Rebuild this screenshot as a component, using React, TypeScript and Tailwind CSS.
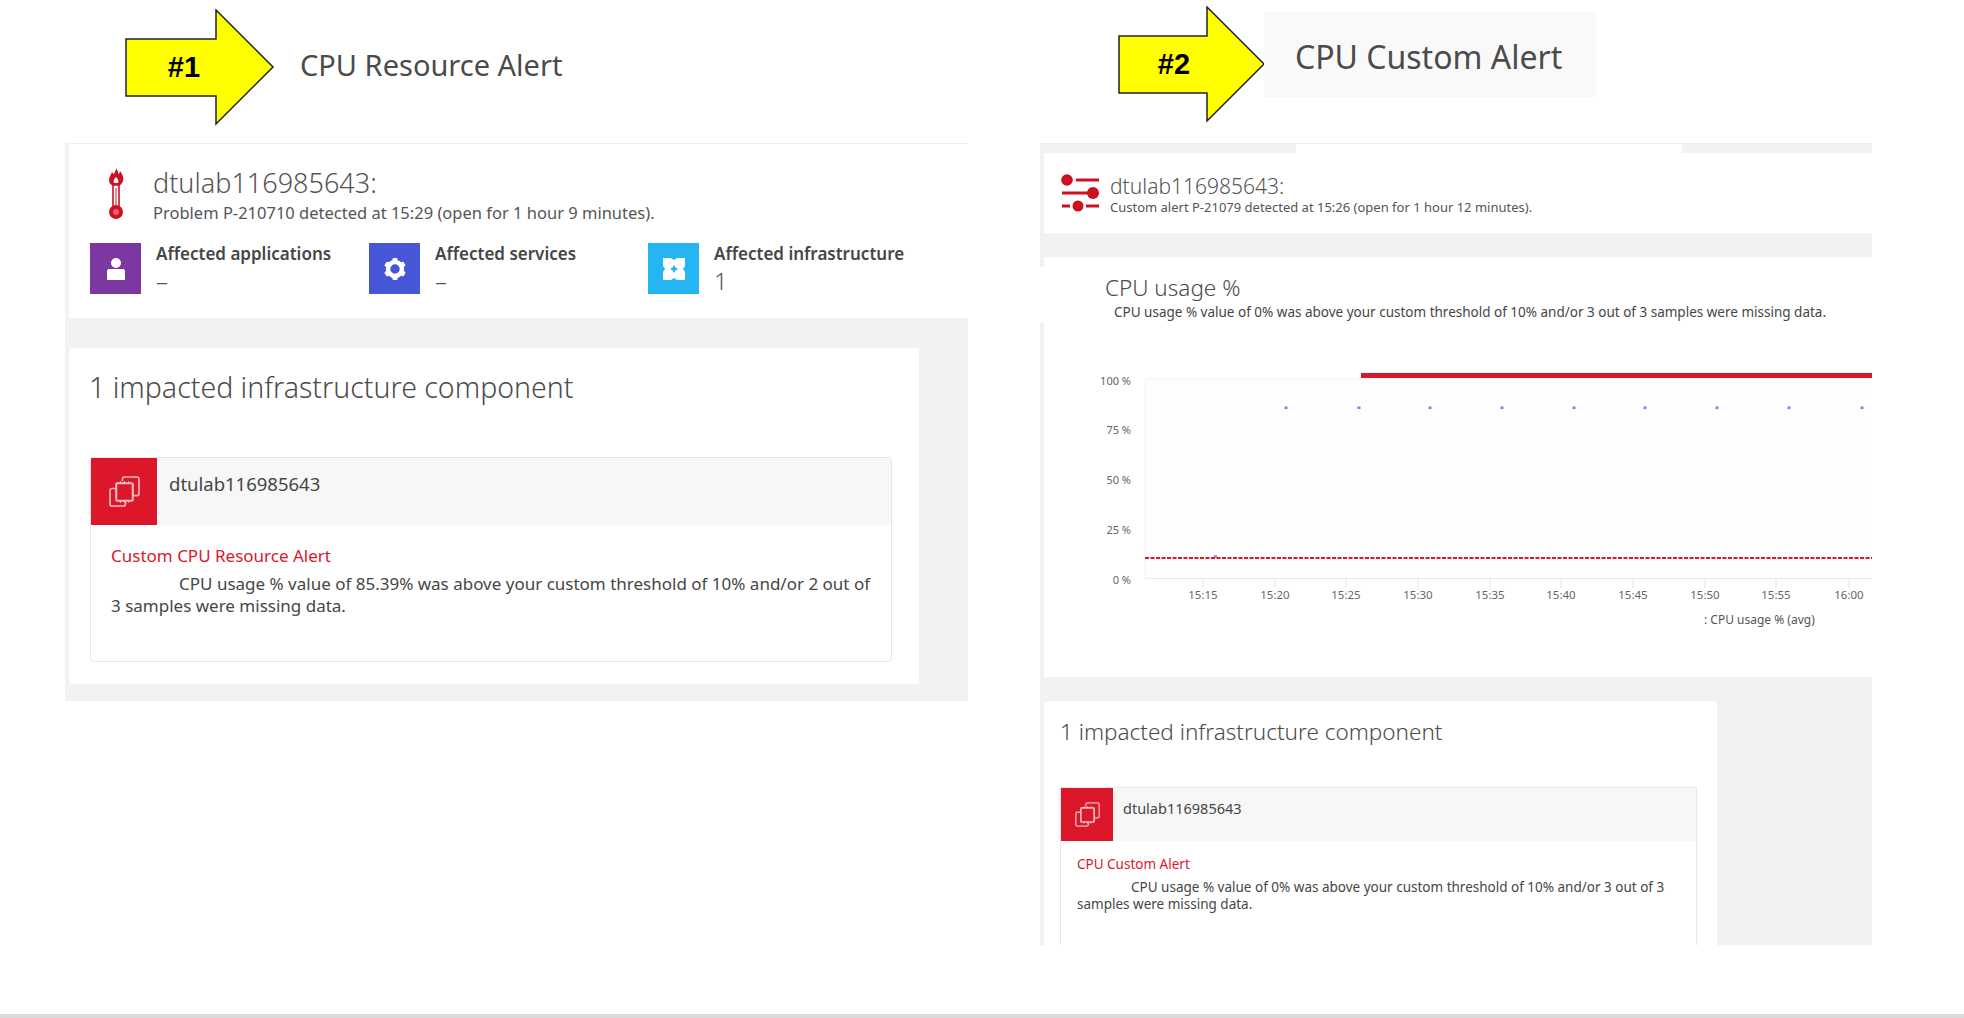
/* Two alert screenshots side by side, each labelled with a yellow arrow. */
const bodyFont = "font-['Noto_Sans',sans-serif]";

function Arrow({ label, tip, base, labelX }: { label: string; tip: number; base: number; labelX: number }) {
  return (
    <svg width={tip + 2} height="118" viewBox={`0 0 ${tip + 2} 118`} className="shrink-0">
      <polygon
        points={`1,30 ${base},30 ${base},1 ${tip},58 ${base},115 ${base},87 1,87`}
        fill="#ffff00"
        stroke="#222"
        strokeWidth="1.5"
      />
      <text x={labelX} y="68" textAnchor="middle" fontFamily="Liberation Sans, sans-serif" fontWeight="700" fontSize="29" fill="#000">
        {label}
      </text>
    </svg>
  );
}

function Thermometer() {
  return (
    <svg width="18" height="52" viewBox="0 0 18 52" className="shrink-0">
      <path d="M9 0c1 3 3 3 2 6 2-1 2-2 2-3 3 4 4 7 3 10-1 3-3 5-7 5s-7-2-7-6c0-3 2-5 3-8 1 1 1 2 2 2 1-2 2-4 2-6z" fill="#cc1222" />
      <path d="M9 9c2 2 3 4 2 6H7c-1-2 0-4 2-6z" fill="#fff" />
      <rect x="6" y="17" width="6" height="24" fill="#fff" stroke="#cc1222" strokeWidth="1.6" />
      <rect x="8.2" y="20" width="1.6" height="20" fill="#e0747d" />
      <circle cx="9" cy="44" r="7" fill="#cc1222" />
      <circle cx="9" cy="44" r="3" fill="#e8606c" />
    </svg>
  );
}

function Sliders() {
  return (
    <svg width="38" height="38" viewBox="0 0 38 38" className="shrink-0" fill="#cc1020">
      <circle cx="6" cy="6" r="5.8" />
      <rect x="15" y="4.500" width="23" height="3" />
      <rect x="1" y="17.500" width="28" height="3" />
      <circle cx="32" cy="19" r="6" />
      <rect x="1" y="30.500" width="8" height="3" />
      <circle cx="17" cy="32" r="5.500" />
      <rect x="25" y="30.500" width="13" height="3" />
    </svg>
  );
}

function HostStack({ size }: { size: number }) {
  return (
    <svg width={size} height={size} viewBox="0 0 30 30" fill="none" stroke="#fff" strokeOpacity="0.7" strokeWidth="1.5">
      <path d="M13 5V3a2 2 0 0 1 2-2h12a2 2 0 0 1 2 2v14a2 2 0 0 1-2 2h-3" />
      <path d="M6 12H3a2 2 0 0 0-2 2v13a2 2 0 0 0 2 2h11a2 2 0 0 0 2-2v-2" />
      <rect x="7" y="7" width="16" height="17" rx="1" strokeWidth="2" />
      <path d="M11 5v2M15 5v2M19 5v2M11 24v2M15 24v2M19 24v2" strokeWidth="1" />
    </svg>
  );
}

function AppIcon() {
  return (
    <svg width="20" height="24" viewBox="0 0 20 24" fill="#fff">
      <circle cx="10" cy="6" r="5" />
      <path d="M1 14a2 2 0 0 1 2-2h14a2 2 0 0 1 2 2v9H1z" />
    </svg>
  );
}

function ServiceIcon() {
  return (
    <svg width="24" height="24" viewBox="0 0 24 24">
      <circle cx="12" cy="12" r="7" fill="none" stroke="#fff" strokeWidth="4.5" />
      {[0, 60, 120, 180, 240, 300].map((deg) => (
        <rect key={deg} x="9.5" y="1" width="5" height="4" rx="1" fill="#fff" transform={`rotate(${deg} 12 12)`} />
      ))}
    </svg>
  );
}

function InfraIcon() {
  return (
    <svg width="24" height="24" viewBox="0 0 24 24">
      <path d="M1 1h8l3 2 3-2h8v8l-2 3 2 3v8h-8l-3-2-3 2H1v-8l2-3-2-3z" fill="#fff" />
      <path d="M12 8l1.500 2.500L16 12l-2.500 1.500L12 16l-1.500-2.500L8 12l2.500-1.500z" fill="#25b5f2" />
    </svg>
  );
}

function Tile({ color, icon, label, value }: { color: string; icon: React.ReactNode; label: string; value: string }) {
  return (
    <div className="flex w-[279px]">
      <div className={`flex h-[51px] w-[51px] items-center justify-center ${color}`}>{icon}</div>
      <div className="ml-[15px] pt-px">
        <div className="text-[17px] leading-5 font-semibold text-[#454646]">{label}</div>
        <div className="mt-[3px] text-[24px] leading-[28px] font-light text-[#555]">{value}</div>
      </div>
    </div>
  );
}

function UsageChart() {
  const yLabels = [
    { text: "100 %", y: 25 },
    { text: "75 %", y: 74 },
    { text: "50 %", y: 124 },
    { text: "25 %", y: 174 },
    { text: "0 %", y: 224 },
  ];
  const xTicks = [
    { x: 159, text: "15:15" },
    { x: 231, text: "15:20" },
    { x: 302, text: "15:25" },
    { x: 374, text: "15:30" },
    { x: 446, text: "15:35" },
    { x: 517, text: "15:40" },
    { x: 589, text: "15:45" },
    { x: 661, text: "15:50" },
    { x: 732, text: "15:55" },
    { x: 805, text: "16:00" },
  ];
  const dots = [242, 315, 386, 458, 530, 601, 673, 745, 818];

  return (
    <svg width="828" height="280" viewBox="0 0 828 280" fontFamily="Noto Sans, sans-serif" fill="#666">
      <rect x="101" y="19" width="727" height="199" fill="#fdfdfd" />
      <path d="M101 19H828M101 19V218" stroke="#f3f3f3" />
      <path d="M101 218.500H828" stroke="#e6eaf5" />
      <rect x="317" y="13" width="511" height="5" fill="#dc172a" />
      {dots.map((x) => (
        <rect key={x} x={x - 1.5} y="46.500" width="3" height="2.500" fill="#a86ee0" />
      ))}
      <rect x="170" y="195" width="3" height="3" fill="#b58be8" />
      <path d="M101 198H828" stroke="#dc172a" strokeWidth="2" strokeDasharray="4 1.500" />
      {yLabels.map((l) => (
        <text key={l.text} x="87" y={l.y} textAnchor="end" fontSize="11">
          {l.text}
        </text>
      ))}
      {xTicks.map((t) => (
        <g key={t.text}>
          <path d={`M${t.x} 218V228`} stroke="#dfe4f2" />
          <text x={t.x} y="239" textAnchor="middle" fontSize="11.500">
            {t.text}
          </text>
        </g>
      ))}
      <text x="660" y="264" fontSize="12" fill="#555">
        : CPU usage % (avg)
      </text>
    </svg>
  );
}

export default function App() {
  return (
    <div className={`flex h-[1018px] w-[1964px] flex-col overflow-hidden bg-white ${bodyFont} text-[#454646]`}>
      <div className="flex flex-1">
        {/* alert 1 */}
        <section className="ml-[65px] w-[903px]">
          <div className="flex h-[143px] items-start pt-[9px] pl-[60px]">
            <Arrow label="#1" tip={148} base={91} labelX={59} />
            <h1 className="ml-[25px] pt-[36px] text-[29px] leading-[40px] font-normal text-[#4b4b4b]">CPU Resource Alert</h1>
          </div>
          <div className="h-[558px] border-t border-[#eeeeee] bg-[#f2f2f2] pl-1">
            <div className="h-[174px] bg-white pt-[24px]">
              <div className="flex pl-[38px]">
                <Thermometer />
                <div className="ml-[28px]">
                  <div className="text-[27px] leading-[30px] font-light text-[#555]">dtulab116985643:</div>
                  <div className="mt-[5px] text-[16.5px] leading-5 text-[#555]">Problem P-210710 detected at 15:29 (open for 1 hour 9 minutes).</div>
                </div>
              </div>
              <div className="mt-5 flex pl-[21px]">
                <Tile color="bg-[#7c38a1]" icon={<AppIcon />} label="Affected applications" value="–" />
                <Tile color="bg-[#4556d7]" icon={<ServiceIcon />} label="Affected services" value="–" />
                <Tile color="bg-[#25b5f2]" icon={<InfraIcon />} label="Affected infrastructure" value="1" />
              </div>
            </div>
            <div className="mt-[30px] h-[336px] w-[850px] rounded-sm bg-white pr-[21px] pl-5 pt-[19px]">
              <h2 className="text-[28.5px] leading-[40px] font-light text-[#4b4b4b]">1 impacted infrastructure component</h2>
              <div className="mt-[50px] ml-px h-[205px] w-[802px] rounded-sm border border-[#e6e6e6]">
                <div className="flex h-[67px] bg-[#f7f7f7]">
                  <div className="flex w-[66px] items-center justify-center bg-[#dc172a]">
                    <HostStack size={31} />
                  </div>
                  <div className="ml-[12px] pt-[14px] text-[18.5px] leading-6 text-[#454646]">dtulab116985643</div>
                </div>
                <div className="px-5 pt-[20px] text-[17px] leading-[22px]">
                  <div className="text-[#dc172a]">Custom CPU Resource Alert</div>
                  <p className="mt-[6px] indent-[68px] text-[#454646]">
                    CPU usage % value of 85.39% was above your custom threshold of 10% and/or 2 out of 3 samples were missing data.
                  </p>
                </div>
              </div>
            </div>
          </div>
        </section>

        {/* alert 2 */}
        <section className="ml-[72px] w-[832px]">
          <div className="flex h-[143px] items-start pt-[6px] pl-[78px]">
            <Arrow label="#2" tip={146} base={89} labelX={56} />
            <div className="mt-[6px] ml-[-2px] h-[85px] w-[332px] bg-[#f9f9f9] pt-[23px] pl-[31px] text-[32px] leading-[44px] font-normal text-[#4b4b4b]">
              CPU Custom Alert
            </div>
          </div>
          <div className="relative h-[802px] overflow-hidden border-t border-[#eeeeee] bg-[#f2f2f2] pl-1">
            <div className="flex h-[9px]">
              <div className="ml-[252px] w-[386px] bg-white" />
            </div>
            <div className="flex h-[80px] bg-white pt-[21px] pl-[17px]">
              <Sliders />
              <div className="ml-[11px]">
                <div className="text-[21px] leading-[24px] font-light text-[#555]">dtulab116985643:</div>
                <div className="text-[13px] leading-[18px] text-[#555]">Custom alert P-21079 detected at 15:26 (open for 1 hour 12 minutes).</div>
              </div>
            </div>
            <div className="mt-[24px] h-[420px] bg-white pt-[19px]">
              <div className="pl-[61px] text-[22.5px] leading-[24px] font-light text-[#4b4b4b]">CPU usage %</div>
              <div className="mt-[3px] pl-[70px] text-[13.5px] leading-[18px] text-[#454646]">
                CPU usage % value of 0% was above your custom threshold of 10% and/or 3 out of 3 samples were missing data.
              </div>
              <div className="mt-[39px]">
                <UsageChart />
              </div>
            </div>
            <div className="mt-[24px] h-[300px] w-[673px] rounded-sm bg-white pr-[17px] pl-4 pt-[13px]">
              <h2 className="text-[22.5px] leading-[36px] font-light text-[#4b4b4b]">1 impacted infrastructure component</h2>
              <div className="mt-[37px] w-[637px] border border-[#e6e6e6]">
                <div className="flex h-[53px] bg-[#f7f7f7]">
                  <div className="flex w-[52px] items-center justify-center bg-[#dc172a]">
                    <HostStack size={25} />
                  </div>
                  <div className="ml-[10px] pt-[10px] text-[14.5px] leading-5 text-[#454646]">dtulab116985643</div>
                </div>
                <div className="px-4 pt-[15px] pb-[60px] text-[13.5px] leading-[17px]">
                  <div className="text-[#dc172a]">CPU Custom Alert</div>
                  <p className="mt-[6px] indent-[54px] text-[#454646]">
                    CPU usage % value of 0% was above your custom threshold of 10% and/or 3 out of 3 samples were missing data.
                  </p>
                </div>
              </div>
            </div>
            {/* white gap in the panel's left edge, as in the source capture */}
            <div className="absolute top-[123px] left-0 h-[56px] w-1 bg-white" />
          </div>
        </section>
      </div>
      <div className="h-1 bg-[#d9d9d9]" />
    </div>
  );
}
